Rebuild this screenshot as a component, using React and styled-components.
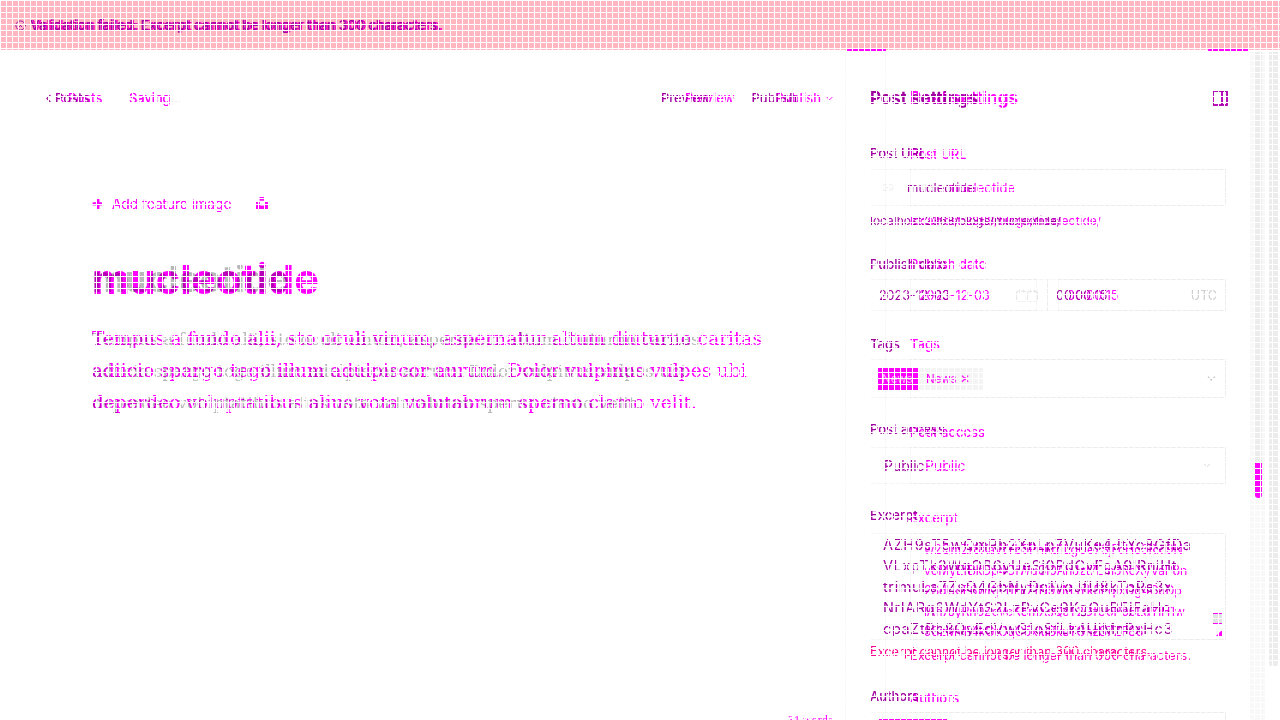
import React from "react";
import styled, { createGlobalStyle } from "styled-components";
import { Calendar, ChevronDown, ChevronLeft, CircleX, Link2, X } from "lucide-react";

const Global = createGlobalStyle`
  html, body { margin: 0; padding: 0; background: #fff; overflow: hidden; }
  * { box-sizing: border-box; }
`;

const Screen = styled.div`
  position: relative;
  width: 1280px;
  height: 720px;
  overflow: hidden;
  display: grid;
  background: #fff;
`;

// both renders of the page sit in the same grid cell
const Layer = styled.div`
  grid-area: 1 / 1;
  display: flex;
  flex-direction: column;
  width: 1280px;
  height: 720px;
  overflow: hidden;
  font-family: Inter, "Liberation Sans", sans-serif;
  color: ${(p) => p.$ink};
  mix-blend-mode: multiply;
`;

const Banner = styled.div`
  flex: none;
  height: 50px;
  display: flex;
  align-items: center;
  gap: 4px;
  padding-left: ${(p) => p.$left}px;
  font-size: 13.5px;
  font-weight: 500;
  background: ${(p) => (p.$fill ? "#ffb6c1" : "transparent")};
`;

const Close = styled.span`
  margin-left: auto;
  margin-right: 20px;
  display: flex;
  color: #ffe6ea;
`;

const Body = styled.div`
  flex: 1;
  display: flex;
  min-height: 0;
`;

const Main = styled.main`
  width: ${(p) => p.$width}px;
  flex: none;
  display: flex;
  flex-direction: column;
  border-right: 1px solid #f8f8f8;
`;

const TopBar = styled.div`
  height: 96px;
  flex: none;
  display: flex;
  align-items: center;
  padding: 0 ${(p) => p.$right}px 0 ${(p) => p.$left}px;
  font-size: 13px;
`;

const Crumb = styled.span`
  width: ${(p) => p.$width}px;
  display: flex;
  align-items: center;
  font-weight: 500;
`;

const Saving = styled.span`
  color: #ff00ff;
`;

const Dots = styled.span`
  color: #eeeeee;
`;

const TopActions = styled.div`
  margin-left: auto;
  display: flex;
  align-items: center;
  gap: 41px;
  font-weight: 500;
`;

const Publish = styled.span`
  display: flex;
  align-items: center;
  gap: 3px;
`;

const Editor = styled.div`
  padding: 47px 0 0 92px;
  width: 780px;
  display: flex;
  flex-direction: column;
`;

const FeatureRow = styled.div`
  height: 20px;
  display: flex;
  align-items: center;
  gap: 8px;
  font-size: 14px;
  color: #ff00ff;
  font-weight: 300;
`;

const UnsplashIcon = styled.svg`
  margin-left: 16px;
  width: 12px;
  height: 12px;
  fill: #ff00ff;
`;

const Title = styled.h1`
  margin: 44px 0 0;
  font-size: ${(p) => p.$size}px;
  line-height: 44px;
  font-weight: 700;
  color: ${(p) => p.$color};
`;

const Lead = styled.p`
  margin: 22px 0 0;
  font-family: "DejaVu Serif", "Liberation Serif", serif;
  font-size: ${(p) => p.$size}px;
  line-height: 32px;
  white-space: nowrap;
  color: ${(p) => p.$color};
`;

const Side = styled.aside`
  flex: 1;
  min-width: 0;
  padding: 0 54px 0 24px;
  display: flex;
  flex-direction: column;
`;

const SideHead = styled.div`
  height: 96px;
  flex: none;
  display: flex;
  align-items: center;
  justify-content: space-between;
  font-size: 17px;
  font-weight: 700;
`;

const PanelIcon = styled.svg`
  width: 16px;
  height: 16px;
  margin-right: -2px;
  fill: none;
  stroke: currentColor;
  stroke-width: 1.5;
`;

const Label = styled.div`
  margin-top: ${(p) => p.$top}px;
  flex: none;
  height: 18px;
  line-height: 18px;
  font-size: 13px;
  font-weight: 500;
`;

const Field = styled.div`
  margin-top: ${(p) => p.$top}px;
  flex: none;
  height: ${(p) => p.$height}px;
  border: 1px solid #f6f6f6;
  display: flex;
  align-items: center;
  padding: 0 ${(p) => p.$pad ?? 8}px;
  font-size: ${(p) => p.$size || 13}px;
`;

const FieldIcon = styled.span`
  display: flex;
  margin-left: -26px;
  width: 26px;
  color: #eeeeee;
`;

const Help = styled.div`
  margin-top: ${(p) => p.$top}px;
  flex: none;
  font-size: ${(p) => p.$size || 12}px;
  line-height: 16px;
  color: ${(p) => p.$color || "inherit"};
  white-space: nowrap;
`;

const DateRow = styled.div`
  margin-top: 6px;
  flex: none;
  display: flex;
  gap: 10px;
  height: 32px;
`;

const DateBox = styled.div`
  flex: ${(p) => p.$flex};
  border: 1px solid #f6f6f6;
  display: flex;
  align-items: center;
  justify-content: space-between;
  padding: 0 8px;
  font-size: 12.5px;
`;

const Faint = styled.span`
  display: flex;
  color: #e6e6e6;
`;

const Chip = styled.span`
  display: inline-flex;
  align-items: center;
  flex: none;
  width: ${(p) => p.$width}px;
  height: 22px;
  padding: 0 ${(p) => p.$pad}px;
  font-size: 11.5px;
  background: ${(p) => p.$bg};
  color: ${(p) => p.$color};
`;

const Caret = styled.span`
  margin-left: auto;
  display: flex;
  color: #e0e0e0;
`;

const Excerpt = styled.div`
  position: relative;
  margin-top: ${(p) => p.$top}px;
  flex: none;
  height: 107px;
  border: 1px solid #f6f6f6;
  padding: ${(p) => p.$pad}px 20px 0 ${(p) => p.$left}px;
  font-size: ${(p) => p.$size}px;
  line-height: ${(p) => p.$line}px;
  letter-spacing: ${(p) => p.$track}px;
`;

const ExcerptLine = styled.div`
  white-space: nowrap;
`;

const ExcerptThumb = styled.div`
  position: absolute;
  top: 79px;
  right: 3px;
  width: 9px;
  height: 11px;
  background: #e4e4e4;
  border-top: 1px solid #ff00ff;
  border-bottom: 1px solid #ff00ff;
`;

const Grip = styled.svg`
  position: absolute;
  right: 2px;
  bottom: 1px;
  width: 9px;
  height: 9px;
  fill: #ff00ff;
`;

const AuthorChip = styled.span`
  margin-top: 6px;
  align-self: flex-start;
  width: 68px;
  height: 24px;
  background: #ff00ff;
  font-size: 11.5px;
  padding-left: 6px;
  line-height: 24px;
  color: #ffb0ff;
`;

const ScrollTrack = styled.div`
  position: absolute;
  top: 52px;
  left: ${(p) => p.$x}px;
  width: ${(p) => p.$width}px;
  height: ${(p) => p.$height}px;
  background: ${(p) => p.$bg};
  border-radius: 0 0 4px 4px;
`;

const Tick = styled.div`
  position: absolute;
  top: 49px;
  left: ${(p) => p.$x}px;
  width: 40px;
  height: 2px;
  background: #ff00ff;
`;

const Footnote = styled.div`
  position: absolute;
  left: 788px;
  top: 713px;
  font-size: 12px;
  color: #ff00ff;
`;

// the white lattice that runs over the whole capture
const Lattice = styled.div`
  position: absolute;
  inset: 0;
  pointer-events: none;
  background-image:
    repeating-linear-gradient(to right, #fff 0 1px, transparent 1px 6px),
    repeating-linear-gradient(to bottom, #fff 0 1px, transparent 1px 6px);
`;

const EXCERPT_A = [
  "AZH9sT5wQmRb2XnLp7VuKe4JtYc8GfDa",
  "VLxpTk3WqOB6yUeSj0PdCvFgA9lRniHt",
  "trimuLa7ZsQ4GbNyDc1VoJfU8kTpRe3x",
  "NrIARq6WdYtS2LzPvCe9KgOuB5jFaHc",
  "cpaZtRb8QyEdVwG1oSfLk4UjMnPxHc3",
];

const EXCERPT_B = [
  "w2QmZr8XaVtYb5PnKd1LgUe7SjFcHo3RxI9N",
  "v6MyEfBkDp4OiWuCl0AhJzt7Lm3RcXyVaP8n",
  "2SdUoF6wKjTi1HrZfN9vMsYk5EqIxOg4CuDp",
  "lAh7JyRn0ZeVcK8mXsQaT2GfUoPb6LdYiH1w",
  "9SzMvF4kGtOqC5xIuBkuTGhzS7ZF86",
];

function Capture({ v }) {
  const isNew = v === "new";
  const ink = isNew ? "#ff00ff" : "#a000a0";
  const soft = isNew ? "#ff00ff" : "#b8b8b8";
  const excerpt = isNew ? EXCERPT_B : EXCERPT_A;
  return (
    <Layer $ink={ink}>
      <Banner $fill={!isNew} $left={isNew ? 32 : 15}>
        {!isNew && <CircleX size={11} />}
        <span>Validation failed: Excerpt cannot be longer than 300 characters.</span>
        <Close>
          <X size={13} />
        </Close>
      </Banner>
      <Body>
        <Main $width={isNew ? 886 : 846}>
          <TopBar $left={isNew ? 55 : 42} $right={isNew ? 50 : 48}>
            <Crumb $width={isNew ? 74 : 87}>
              <ChevronLeft size={13} />
              Posts
            </Crumb>
            <Saving>
              Saving<Dots>...</Dots>
            </Saving>
            <TopActions>
              <span>Preview</span>
              <Publish>
                Publish
                {isNew && <ChevronDown size={11} />}
              </Publish>
            </TopActions>
          </TopBar>
          <Editor>
            <FeatureRow>
              <span>✚</span>
              <span>Add feature image</span>
              <UnsplashIcon viewBox="0 0 24 24">
                <path d="M7.5 6.75V0h9v6.75h-9zm9 3.75H24V24H0V10.5h7.5v6.75h9V10.5z" />
              </UnsplashIcon>
            </FeatureRow>
            <Title $size={isNew ? 41.5 : 36} $color={soft}>
              mucleotide
            </Title>
            <Lead $size={isNew ? 18.5 : 16.8} $color={soft}>
              Tempus a fundo alii, sto oculi vinum, aspernatur altum diuturno caritas
              <br />
              adiicio spargo tego illum adulpiscor aurum. Dolor vulpinus vulpes ubi
              <br />
              deperdeo voluptatibus alius vota volutabrum sperno clamo velit.
            </Lead>
          </Editor>
        </Main>
        <Side>
          <SideHead>
            <span>Post settings</span>
            <PanelIcon viewBox="0 0 16 16">
              <rect x="1" y="1" width="14" height="14" />
              <path d="M10 1v14" />
            </PanelIcon>
          </SideHead>
          <Label $top={isNew ? -1 : -2}>Post URL</Label>
          <Field $top={isNew ? 6 : 7} $height={37} $pad={36}>
            <FieldIcon>
              <Link2 size={13} />
            </FieldIcon>
            mucleotide
          </Field>
          <Help $top={7}>localhost:2368/blogs/mucleotide/</Help>
          <Label $top={26}>Publish date</Label>
          <DateRow>
            <DateBox $flex={isNew ? "0 0 138px" : "0 0 167px"}>
              <span>2023-12-03</span>
              <Faint>
                <Calendar size={13} />
              </Faint>
            </DateBox>
            <DateBox $flex="1">
              <span>00:00:15</span>
              <Faint>UTC</Faint>
            </DateBox>
          </DateRow>
          <Label $top={24}>Tags</Label>
          <Field $top={6} $height={39} $pad={7}>
            {isNew ? (
              <Chip $width={65} $pad={8} $bg="#f4f4f4" $color="#ff00ff">
                News ✕
              </Chip>
            ) : (
              <Chip $width={40} $pad={4} $bg="#ff00ff" $color="#ffb0ff">
                News
              </Chip>
            )}
            <Caret>
              <ChevronDown size={13} />
            </Caret>
          </Field>
          <Label $top={isNew ? 25 : 22}>Post access</Label>
          <Field $top={isNew ? 6 : 9} $height={37} $pad={isNew ? 14 : 13} $size={14}>
            Public
            <Caret>
              <ChevronDown size={9} />
            </Caret>
          </Field>
          <Label $top={isNew ? 25 : 22}>Excerpt</Label>
          <Excerpt
            $top={isNew ? 6 : 9}
            $pad={isNew ? 6 : 0}
            $left={isNew ? 13 : 12}
            $size={isNew ? 12.4 : 14.5}
            $line={isNew ? 20.5 : 21}
            $track={isNew ? -0.2 : 0.6}
          >
            {excerpt.map((line) => (
              <ExcerptLine key={line}>{line}</ExcerptLine>
            ))}
            {!isNew && <ExcerptThumb />}
            {!isNew && (
              <Grip viewBox="0 0 9 9">
                <path d="M8 1v7H1z" />
              </Grip>
            )}
          </Excerpt>
          <Help $top={isNew ? 8 : 4} $size={12.75} $color={isNew ? "#ff00c0" : "#ff0090"}>
            Excerpt cannot be longer than 300 characters.
          </Help>
          <Label $top={isNew ? 25 : 27}>Authors</Label>
          <Field $top={isNew ? 5 : 7} $height={40}>
            {!isNew && <AuthorChip>admin</AuthorChip>}
          </Field>
        </Side>
      </Body>
    </Layer>
  );
}

export default function App() {
  return (
    <Screen>
      <Global />
      <ScrollTrack $x={1250} $width={15} $height={668} $bg="#f8f8f8" />
      <ScrollTrack $x={1255} $width={7} $height={446} $bg="#ececec" />
      <ScrollTrack $x={1255} $width={7} $height={446} $bg="linear-gradient(to bottom, transparent 411px, #ff00ff 411px)" />
      <ScrollTrack $x={1269} $width={9} $height={615} $bg="#ececec" />
      <Capture v="old" />
      <Capture v="new" />
      <Tick $x={846} />
      <Tick $x={1208} />
      <Footnote>31 words</Footnote>
      <Lattice />
    </Screen>
  );
}
